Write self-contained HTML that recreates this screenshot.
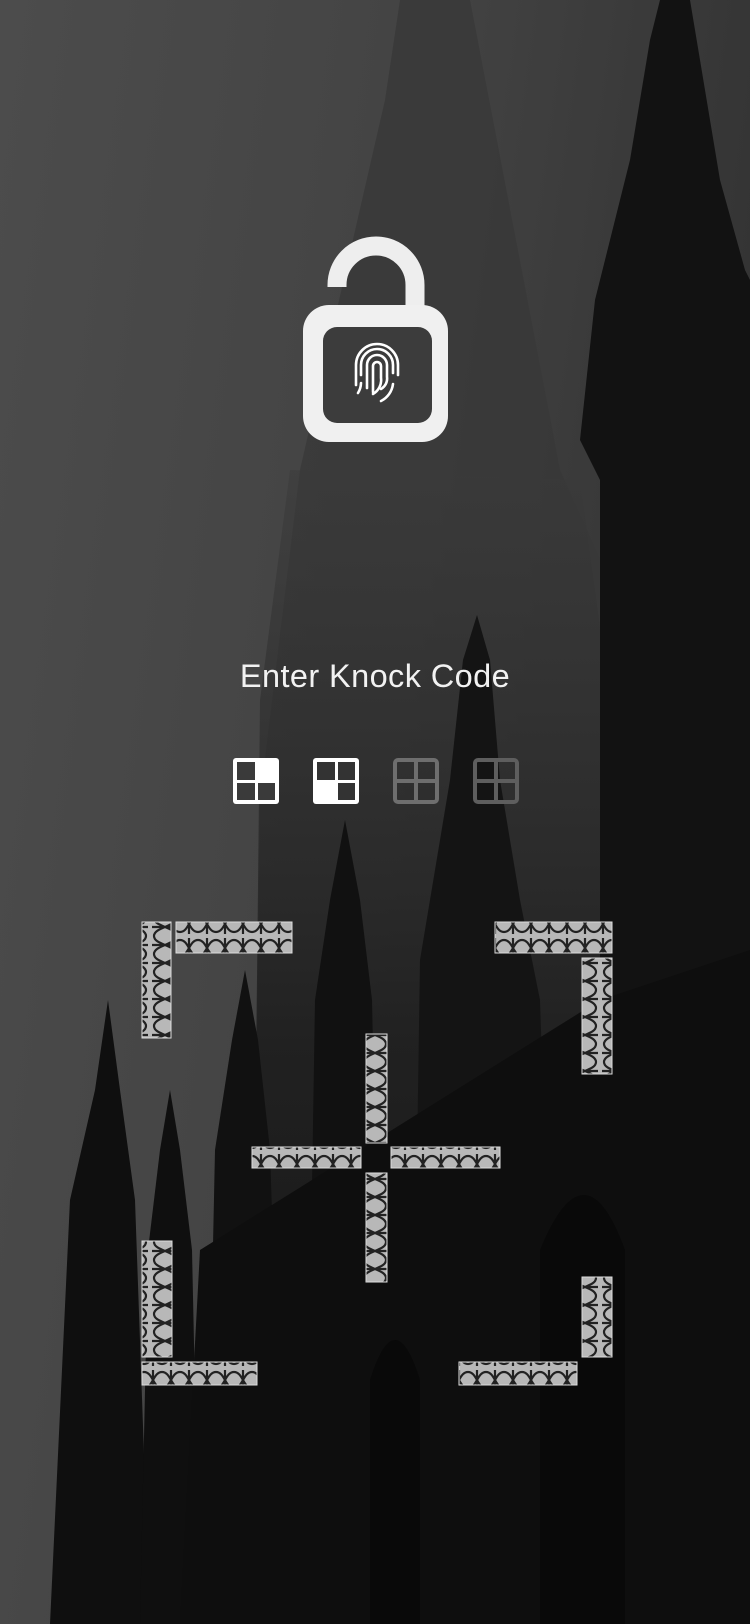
<!DOCTYPE html>
<html><head><meta charset="utf-8"><style>
*{margin:0;padding:0}
body{width:750px;height:1624px;overflow:hidden;position:relative;background:#4a4a4a;font-family:"Liberation Sans",sans-serif}
.bg{position:absolute;inset:0}
.t{position:absolute;left:0;width:750px;top:658px;text-align:center;color:#f2f2f2;font-size:32.5px;letter-spacing:0.4px}
.k{position:absolute;top:757px;width:48px;height:48px}
</style></head><body>
<svg class="bg" width="750" height="1624" viewBox="0 0 750 1624">
<defs>
<linearGradient id="g" x1="0" y1="0" x2="1" y2="0.3">
<stop offset="0" stop-color="#4c4c4c"/><stop offset="0.5" stop-color="#444"/><stop offset="1" stop-color="#333"/></linearGradient>
<linearGradient id="fog" x1="0" y1="0" x2="0" y2="1">
<stop offset="0" stop-color="#3a3a3a" stop-opacity="0.5"/><stop offset="0.5" stop-color="#1e1e1e" stop-opacity="0.9"/><stop offset="1" stop-color="#111"/></linearGradient>
<pattern id="kh" width="18" height="24" patternUnits="userSpaceOnUse">
<rect width="18" height="24" fill="#b8b8b8"/>
<path d="M0 4 C9 4 9 20 18 20 M0 20 C9 20 9 4 18 4 M9 2 V22" stroke="#222" stroke-width="2.2" fill="none"/>
</pattern>
<pattern id="kv" width="30" height="18" patternUnits="userSpaceOnUse">
<rect width="30" height="18" fill="#b8b8b8"/>
<path d="M4 0 C4 9 26 9 26 18 M26 0 C26 9 4 9 4 18 M2 9 H28" stroke="#222" stroke-width="2.2" fill="none"/>
</pattern>
</defs>
<rect width="750" height="1624" fill="url(#g)"/>
<polygon points="400,0 470,0 560,470 600,560 610,1624 250,1624 260,800 300,470 385,100" fill="#383838" opacity="0.8"/>
<polygon points="290,470 580,480 610,700 610,1624 250,1624 260,700" fill="url(#fog)"/>
<polygon points="660,0 690,0 700,60 720,180 745,270 750,280 750,1624 600,1624 600,480 580,440 595,300 630,160 650,40" fill="#121212"/>
<polygon points="477,615 490,660 500,780 520,900 540,1000 560,1624 410,1624 420,960 450,780 463,660" fill="#141414"/>
<polygon points="345,820 360,900 372,1000 385,1624 305,1624 315,1000 330,900" fill="#111"/>
<polygon points="245,970 258,1040 270,1150 285,1624 205,1624 215,1150 232,1040" fill="#111"/>
<polygon points="108,1000 120,1090 135,1200 150,1624 50,1624 70,1200 95,1090" fill="#0f0f0f"/>
<polygon points="170,1090 180,1150 192,1250 200,1624 140,1624 148,1250 160,1150" fill="#0f0f0f"/>
<polygon points="200,1250 600,1000 750,950 750,1624 180,1624" fill="#0e0e0e"/>
<path d="M540 1624 V1250 Q585 1140 625 1250 V1624Z" fill="#090909"/>
<path d="M370 1624 V1380 Q395 1300 420 1380 V1624Z" fill="#090909"/>
<g stroke="#ddd" stroke-width="1">
<rect x="142" y="922" width="29" height="116" fill="url(#kv)"/>
<rect x="176" y="922" width="116" height="31" fill="url(#kh)"/>
<rect x="495" y="922" width="117" height="31" fill="url(#kh)"/>
<rect x="582" y="958" width="30" height="116" fill="url(#kv)"/>
<rect x="366" y="1034" width="21" height="109" fill="url(#kv)"/>
<rect x="252" y="1147" width="109" height="21" fill="url(#kh)"/>
<rect x="391" y="1147" width="109" height="21" fill="url(#kh)"/>
<rect x="366" y="1173" width="21" height="109" fill="url(#kv)"/>
<rect x="142" y="1241" width="30" height="116" fill="url(#kv)"/>
<rect x="142" y="1362" width="115" height="23" fill="url(#kh)"/>
<rect x="582" y="1277" width="30" height="80" fill="url(#kv)"/>
<rect x="459" y="1362" width="118" height="23" fill="url(#kh)"/>
</g>
<path d="M337 287 V285 A39 39 0 0 1 415 285 V310" fill="none" stroke="#eee" stroke-width="19"/>
<rect x="303" y="305" width="145" height="137" rx="26" fill="#f0f0f0"/>
<rect x="323" y="327" width="109" height="96" rx="14" fill="#3c3c3c"/>
<g fill="none" stroke="#fff" stroke-width="2.6" stroke-linecap="round">
<path d="M361 375 v-10 a16 16 0 0 1 32 0 v8"/>
<path d="M356 385 v-20 a21 21 0 0 1 42 0 v10"/>
<path d="M367 388 v-23 a10 10 0 0 1 20 0 v12 a12 12 0 0 1 -6 12"/>
<path d="M373 392 v-26 a4 4 0 0 1 8 0 v12 a16 16 0 0 1 -8 16"/>
<path d="M393 384 a22 22 0 0 1 -12 17"/>
<path d="M361 383 a20 20 0 0 1 -3 10"/>
</g>
</svg>
<div class="t">Enter Knock Code</div>
<svg class="k" style="left:232px" viewBox="0 0 48 48"><rect x="1" y="1" width="46" height="46" rx="3" fill="#fff"/><rect x="5" y="5" width="18" height="18" fill="#3a3a3a"/><rect x="5" y="26" width="18" height="17" fill="#3a3a3a"/><rect x="26" y="26" width="17" height="17" fill="#3a3a3a"/></svg>
<svg class="k" style="left:312px" viewBox="0 0 48 48"><rect x="1" y="1" width="46" height="46" rx="3" fill="#fff"/><rect x="5" y="5" width="18" height="18" fill="#333"/><rect x="26" y="5" width="17" height="18" fill="#333"/><rect x="26" y="26" width="17" height="17" fill="#333"/></svg>
<svg class="k" style="left:392px" viewBox="0 0 48 48"><g fill="none" stroke="#6e6e6e" stroke-width="4"><rect x="3" y="3" width="42" height="42" rx="3"/><path d="M24 3V45M3 24H45"/></g></svg>
<svg class="k" style="left:472px" viewBox="0 0 48 48"><g fill="none" stroke="#5e5e5e" stroke-width="4"><rect x="3" y="3" width="42" height="42" rx="3"/><path d="M24 3V45M3 24H45"/></g></svg>
</body></html>
